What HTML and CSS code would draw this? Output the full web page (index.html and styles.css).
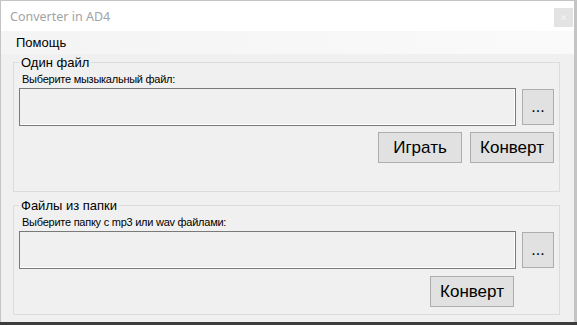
FILE: index.html
```html
<!DOCTYPE html>
<html lang="ru">
<head>
  <meta charset="UTF-8" />
  <meta name="viewport" content="width=device-width, initial-scale=1" />
  <title>Converter in AD4</title>
  <link rel="stylesheet" href="styles.css">
</head>
<body>

  <div class="window">
    <div class="titlebar">
      <span class="title">Converter in AD4</span>
      <button class="close" title="Закрыть">&#x2715;</button>
    </div>

    <div class="menubar">
      <span class="menu-item">Помощь</span>
    </div>

    <div class="content">
      <fieldset class="group group-file">
        <legend>Один файл</legend>
        <div class="caption">Выберите мызыкальный файл:</div>
        <div class="path-row">
          <input class="path" type="text" readonly />
          <button class="btn browse">...</button>
        </div>
        <div class="actions">
          <button class="btn action">Играть</button>
          <button class="btn action">Конверт</button>
        </div>
      </fieldset>

      <fieldset class="group group-folder">
        <legend>Файлы из папки</legend>
        <div class="caption">Выберите папку с mp3 или wav файлами:</div>
        <div class="path-row">
          <input class="path" type="text" readonly />
          <button class="btn browse">...</button>
        </div>
        <div class="actions actions-folder">
          <button class="btn action">Конверт</button>
        </div>
      </fieldset>
    </div>
  </div>

</body>
</html>
```

FILE: styles.css
```css
:root {
  --desk-bg: #c4c4c4;
  --form-bg: #f0f0f0;
  --group-border: #dcdcdc;
  --box-border: #7a7a7a;
  --btn-bg: #e1e1e1;
  --btn-border: #adadad;
  --text-color: #000;
}

html, body {
  height: 100%;
}

body {
  margin: 0;
  background: linear-gradient(to bottom, var(--desk-bg) 322px, #3c3c3c 322px);
  font-family: "Liberation Sans", Arial, sans-serif;
  color: var(--text-color);
  overflow: hidden;
}

.window {
  margin: 1px 0 0 1px;
  width: 573px;
  height: 321px;
  background-color: var(--form-bg);
  display: flex;
  flex-direction: column;
}

.titlebar {
  height: 30px;
  background-color: #fff;
  display: flex;
  align-items: center;
  justify-content: space-between;
  padding: 0 1px 0 9px;
}

.title {
  font-family: "Noto Sans", sans-serif;
  font-size: 12.5px;
  color: #a3a3a3;
}

.close {
  width: 19px;
  height: 19px;
  border: none;
  background-color: #e3e3e3;
  color: #f4f4f4;
  font-size: 9px;
  padding: 0;
  margin-top: 3px;
}

.menubar {
  height: 23px;
  display: flex;
  align-items: center;
  padding-left: 15px;
  background: linear-gradient(to right, #f4f4f4, #fafafa);
}

.menu-item {
  font-size: 13px;
}

.content {
  display: flex;
  flex-direction: column;
  gap: 6px;
  padding: 1px 0 0 12px;
}

.group {
  margin: 0;
  width: 547px;
  box-sizing: border-box;
  border: 1px solid var(--group-border);
  padding: 0 5px;
}

.group legend {
  font-size: 13px;
  padding: 0 2px;
  margin-left: 0;
}

.group-file {
  height: 137px;
}

.group-folder {
  height: 117px;
}

.caption {
  font-size: 11px;
  letter-spacing: -0.25px;
  margin-top: 2px;
  line-height: 14px;
  padding-left: 3px;
}

.path-row {
  display: flex;
  align-items: center;
  gap: 6px;
  margin-top: 2px;
}

.path {
  width: 497px;
  height: 38px;
  box-sizing: border-box;
  margin: 0;
  border: 1px solid var(--box-border);
  background-color: var(--form-bg);
  box-shadow: inset -1px -1px 0 #fff;
}

.btn {
  background-color: var(--btn-bg);
  border: 1px solid var(--btn-border);
  font-family: "Liberation Sans", Arial, sans-serif;
  font-size: 17px;
  color: var(--text-color);
  padding: 0;
  margin: 0;
}

.browse {
  width: 32px;
  height: 36px;
  font-size: 16px;
}

.actions {
  display: flex;
  justify-content: flex-end;
  gap: 8px;
  margin-top: 6px;
}

.actions-folder {
  margin-right: 40px;
  margin-top: 7px;
}

.action {
  width: 84px;
  height: 31px;
}
```
